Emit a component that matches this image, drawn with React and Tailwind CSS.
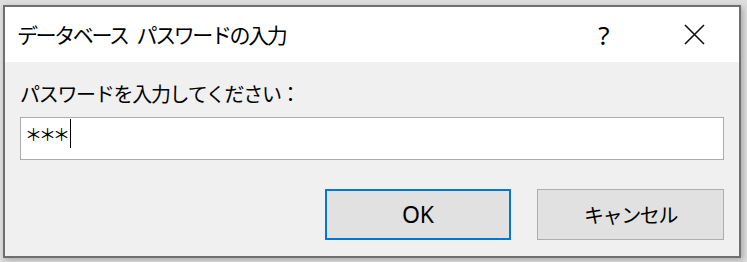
export default function App() {
    const jp = { fontFamily: '"Noto Sans CJK JP", "Noto Sans", sans-serif' };

    return (
        <div className="w-[747px] h-[262px] bg-[#dedede] pt-[5px] pl-[3px] overflow-hidden">
            <div
                className="w-[738px] h-[253px] border-2 border-[#6f6f6f] flex flex-col shadow-[2px_2px_6px_rgba(0,0,0,0.25)]"
                style={jp}
            >
                {/* Title bar */}
                <div className="h-[55px] bg-white flex items-center flex-none">
                    <span className="pl-[12px] text-[21px] tracking-[-2.4px] text-black leading-none whitespace-pre">
                        データベース<span className="inline-block w-[9px]" />パスワードの入力
                    </span>
                    <div className="ml-auto flex h-full">
                        <button className="w-[90px] h-full flex items-center justify-center text-[26px] text-black font-['Noto_Sans'] leading-none">
                            ?
                        </button>
                        <button className="w-[90px] h-full flex items-center justify-center">
                            <svg width="21" height="21" viewBox="0 0 21 21" fill="none" stroke="#111" strokeWidth="1.6">
                                <path d="M1 1 L20 20 M20 1 L1 20" />
                            </svg>
                        </button>
                    </div>
                </div>

                {/* Body */}
                <div className="flex-1 bg-[#f0f0f0] px-[15px] flex flex-col">
                    <label className="mt-[18px] leading-[28px] text-[20px] tracking-[-1.3px] text-black">
                        パスワードを入力してください：
                    </label>
                    <div className="mt-[9px] h-[43px] border border-[#ababab] bg-white pl-[4px] pt-[1px] flex items-start">
                        <span className="text-[17px] leading-[29px] tracking-[-3px] text-black">＊＊＊</span>
                        <span className="w-px h-[29px] bg-black ml-[3px]" />
                    </div>
                    <div className="mt-[29px] flex justify-end gap-[26px]">
                        <button className="w-[186px] h-[51px] border-2 border-[#0078d7] bg-[#e1e1e1] flex items-center justify-center text-[23px] text-black font-['Noto_Sans']">
                            OK
                        </button>
                        <button className="w-[187px] h-[51px] border border-[#adadad] bg-[#e1e1e1] flex items-center justify-center text-[20px] tracking-[-1.4px] text-black">
                            キャンセル
                        </button>
                    </div>
                </div>
            </div>
        </div>
    );
}
